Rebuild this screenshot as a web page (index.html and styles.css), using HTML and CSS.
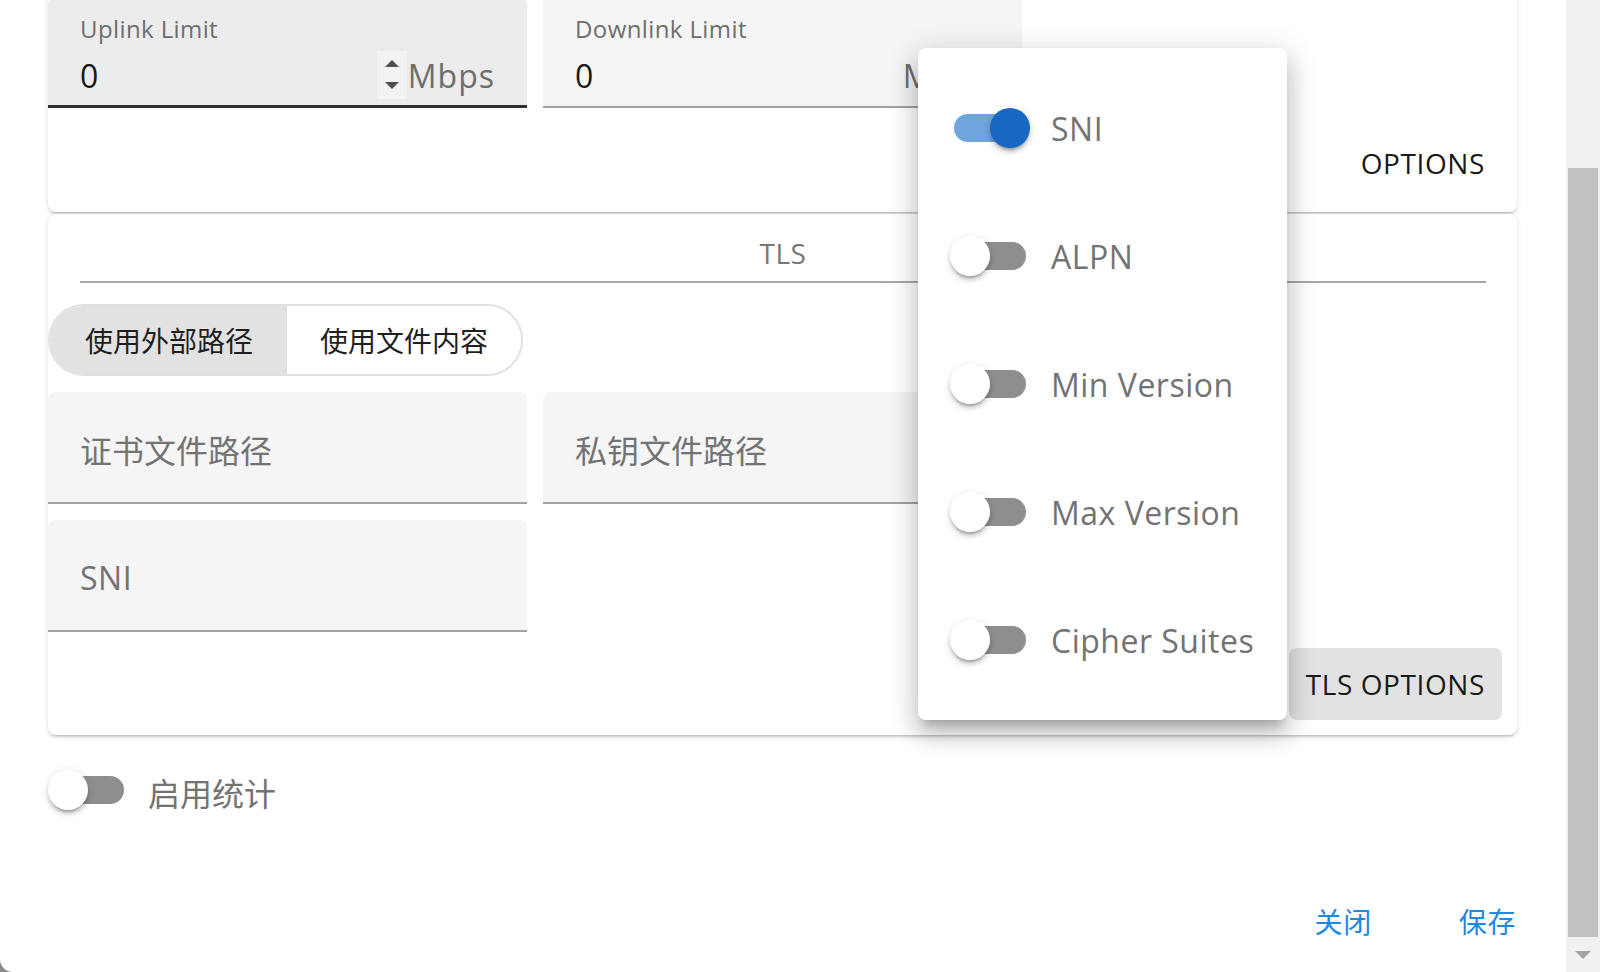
FILE: index.html
```html
<!DOCTYPE html>
<html lang="zh-CN">
<head>
<meta charset="utf-8">
<title>Inbound settings</title>
<link rel="stylesheet" href="styles.css">
</head>
<body>
<div class="dialog">
  <div class="dialog-main">
    <section class="card card-limits">
      <div class="field-grid">
        <div class="field field-filled field-hover">
          <span class="field-label">Uplink Limit</span>
          <div class="field-row">
            <span class="field-value">0</span>
            <span class="spinner"><span class="spin-up"></span><span class="spin-down"></span></span>
            <span class="field-suffix">Mbps</span>
          </div>
        </div>
        <div class="field field-filled">
          <span class="field-label">Downlink Limit</span>
          <div class="field-row">
            <span class="field-value">0</span>
            <span class="spinner spinner-hidden"><span class="spin-up"></span><span class="spin-down"></span></span>
            <span class="field-suffix">Mbps</span>
          </div>
        </div>
      </div>
      <div class="card-actions card-actions-limits">
        <button class="btn btn-text">OPTIONS</button>
      </div>
    </section>

    <section class="card card-tls">
      <div class="tabs"><div class="tab">TLS</div></div>
      <div class="btn-toggle">
        <button class="toggle-btn toggle-active">使用外部路径</button>
        <button class="toggle-btn">使用文件内容</button>
      </div>
      <div class="field-grid field-grid-tls">
        <div class="field field-empty"><span class="field-placeholder cjk">证书文件路径</span></div>
        <div class="field field-empty"><span class="field-placeholder cjk">私钥文件路径</span></div>
        <div class="field-spacer"></div>
        <div class="field field-empty"><span class="field-placeholder">SNI</span></div>
      </div>
      <div class="card-actions">
        <button class="btn btn-tonal">TLS OPTIONS</button>
      </div>
    </section>

    <div class="switch-row">
      <span class="switch"><span class="switch-track"></span><span class="switch-thumb"></span></span>
      <span class="switch-label cjk">启用统计</span>
    </div>

    <div class="dialog-actions">
      <button class="btn btn-link cjk">关闭</button>
      <button class="btn btn-link cjk">保存</button>
    </div>
  </div>
  <div class="scrollbar">
    <div class="scrollbar-thumb"></div>
    <div class="scrollbar-arrow"><span class="arrow-down"></span></div>
  </div>
</div>

<div class="menu">
  <div class="menu-item">
    <span class="switch switch-on"><span class="switch-track"></span><span class="switch-thumb"></span></span>
    <span class="menu-label">SNI</span>
  </div>
  <div class="menu-item">
    <span class="switch"><span class="switch-track"></span><span class="switch-thumb"></span></span>
    <span class="menu-label">ALPN</span>
  </div>
  <div class="menu-item">
    <span class="switch"><span class="switch-track"></span><span class="switch-thumb"></span></span>
    <span class="menu-label">Min Version</span>
  </div>
  <div class="menu-item">
    <span class="switch"><span class="switch-track"></span><span class="switch-thumb"></span></span>
    <span class="menu-label">Max Version</span>
  </div>
  <div class="menu-item">
    <span class="switch"><span class="switch-track"></span><span class="switch-thumb"></span></span>
    <span class="menu-label">Cipher Suites</span>
  </div>
</div>
</body>
</html>
```

FILE: styles.css
```css
* {
  box-sizing: border-box;
}

html, body {
  margin: 0;
  padding: 0;
}

body {
  width: 1600px;
  height: 972px;
  overflow: hidden;
  background: #8a8a8a;
  font-family: "Open Sans", "Noto Sans CJK SC", sans-serif;
  letter-spacing: 0.5px;
  color: #1f1f1f;
  position: relative;
}

.cjk {
  font-family: "Noto Sans CJK SC", "Open Sans", sans-serif;
  letter-spacing: 0;
}

button {
  font-family: inherit;
  border: none;
  background: none;
  margin: 0;
  padding: 0;
  cursor: pointer;
}

.dialog {
  display: flex;
  width: 1600px;
  height: 972px;
  background: #ffffff;
  border-bottom-left-radius: 13px;
  overflow: hidden;
}

.dialog-main {
  flex: 1;
  display: flex;
  flex-direction: column;
  padding: 0 49px 0 48px;
  overflow: hidden;
}

/* Cards */
.card {
  background: #fff;
  border-radius: 8px;
  box-shadow: 0 3px 3px -2px rgba(0, 0, 0, 0.22), 0 2px 4px 0 rgba(0, 0, 0, 0.08), 0 1px 8px 0 rgba(0, 0, 0, 0.06);
  flex-shrink: 0;
}

.card-limits {
  margin-top: -4px;
  border-top-left-radius: 0;
  border-top-right-radius: 0;
}

.card-tls {
  margin-top: 2px;
  display: flex;
  flex-direction: column;
}

.field-grid {
  display: grid;
  grid-template-columns: repeat(3, 1fr);
  gap: 16px;
}

.field-grid-tls {
  margin-top: 16px;
}

/* Fields */
.field {
  height: 112px;
  background: #f5f5f5;
  border-radius: 8px 8px 0 0;
  border-bottom: 2px solid #a2a2a2;
  padding: 0 32px;
}

.field-filled {
  padding-top: 16px;
}

.field-hover {
  background: #ececec;
  border-bottom: 3px solid #303030;
}

.field-label {
  display: block;
  font-size: 24px;
  line-height: 34px;
  color: #6e6e6e;
  letter-spacing: 0.4px;
}

.field-row {
  display: flex;
  align-items: center;
  height: 50px;
  margin-top: 4px;
}

.field-value {
  flex: 1;
  font-size: 32px;
  color: #1a1a1a;
}

.field-suffix {
  font-size: 32px;
  color: #6e6e6e;
  letter-spacing: 1px;
  margin-left: 1px;
}

.spinner {
  width: 30px;
  height: 48px;
  background: #f3f3f3;
  display: flex;
  flex-direction: column;
  align-items: center;
  justify-content: space-between;
  padding: 9px 0 10px;
}

.spinner-hidden {
  visibility: hidden;
}

.spin-up {
  width: 0;
  height: 0;
  border-left: 7px solid transparent;
  border-right: 7px solid transparent;
  border-bottom: 7px solid #4f4f4f;
}

.spin-down {
  width: 0;
  height: 0;
  border-left: 7px solid transparent;
  border-right: 7px solid transparent;
  border-top: 7px solid #4f4f4f;
}

.field-empty {
  display: flex;
  align-items: center;
  padding-top: 4px;
}

.field-placeholder {
  font-size: 32px;
  color: #737373;
}

/* Buttons */
.card-actions {
  display: flex;
  justify-content: flex-end;
  padding: 16px 15px 15px;
}

.card-actions-limits {
  padding: 19px 15px 13px;
}

.btn {
  height: 72px;
  padding: 0 17px;
  border-radius: 8px;
  font-size: 28px;
  color: #1a1a1a;
  letter-spacing: 0.6px;
}

.btn-tonal {
  background: #e2e2e2;
}

/* Tabs */
.tabs {
  margin: 11px 31px 0 32px;
  border-bottom: 2px solid #a8a8a8;
  display: flex;
}

.tab {
  flex: 1;
  height: 56px;
  display: flex;
  align-items: center;
  justify-content: center;
  font-size: 28px;
  color: #777777;
}

/* Toggle group */
.btn-toggle {
  display: inline-flex;
  align-self: flex-start;
  margin-top: 21px;
  height: 72px;
  border: 2px solid #e0e0e0;
  border-radius: 38px;
  overflow: hidden;
}

.toggle-btn {
  padding: 0 33px;
  font-family: "Noto Sans CJK SC", sans-serif;
  font-size: 28px;
  letter-spacing: 0;
  color: #1f1f1f;
  background: #fff;
}

.toggle-active {
  background: #e2e2e2;
  padding: 0 34px 0 35px;
}

/* Switches */
.switch {
  position: relative;
  width: 80px;
  height: 40px;
  flex-shrink: 0;
}

.switch-track {
  position: absolute;
  left: 4px;
  top: 6px;
  width: 72px;
  height: 28px;
  border-radius: 14px;
  background: #8e8e8e;
}

.switch-thumb {
  position: absolute;
  left: 0;
  top: 0;
  width: 40px;
  height: 40px;
  border-radius: 50%;
  background: #fff;
  box-shadow: 0 4px 2px -2px rgba(0, 0, 0, 0.2), 0 4px 4px 0 rgba(0, 0, 0, 0.14), 0 2px 10px 0 rgba(0, 0, 0, 0.12);
}

.switch-on .switch-track {
  background: #70a4dc;
}

.switch-on .switch-thumb {
  left: 40px;
  background: #1867c0;
}

.switch-row {
  display: flex;
  align-items: center;
  gap: 20px;
  margin-top: 35px;
  height: 40px;
  flex-shrink: 0;
}

.switch-label {
  font-size: 32px;
  color: #737373;
  padding-top: 4px;
}

/* Dialog actions */
.dialog-actions {
  margin-top: auto;
  margin-bottom: 15px;
  display: flex;
  justify-content: flex-end;
  gap: 53px;
  margin-right: -16px;
}

.btn-link {
  color: #1e88e5;
  font-size: 28px;
  background: transparent;
}

/* Scrollbar */
.scrollbar {
  width: 34px;
  flex-shrink: 0;
  background: #f1f1f1;
  display: flex;
  flex-direction: column;
  padding-top: 168px;
}

.scrollbar-thumb {
  height: 769px;
  margin: 0 2px;
  background: #c1c1c1;
}

.scrollbar-arrow {
  flex: 1;
  display: flex;
  align-items: center;
  justify-content: center;
}

.arrow-down {
  width: 0;
  height: 0;
  border-left: 8px solid transparent;
  border-right: 8px solid transparent;
  border-top: 8px solid #a3a3a3;
}

/* Menu overlay */
.menu {
  position: absolute;
  left: 918px;
  top: 48px;
  width: 369px;
  height: 672px;
  padding: 16px 0;
  background: #fff;
  border-radius: 8px;
  box-shadow: 0 10px 10px -6px rgba(0, 0, 0, 0.2), 0 16px 22px 2px rgba(0, 0, 0, 0.14), 0 6px 30px 5px rgba(0, 0, 0, 0.12);
}

.menu-item {
  height: 128px;
  display: flex;
  align-items: center;
  gap: 21px;
  padding-left: 32px;
}

.menu-label {
  font-size: 32px;
  color: #737373;
  letter-spacing: 0.5px;
}
```
